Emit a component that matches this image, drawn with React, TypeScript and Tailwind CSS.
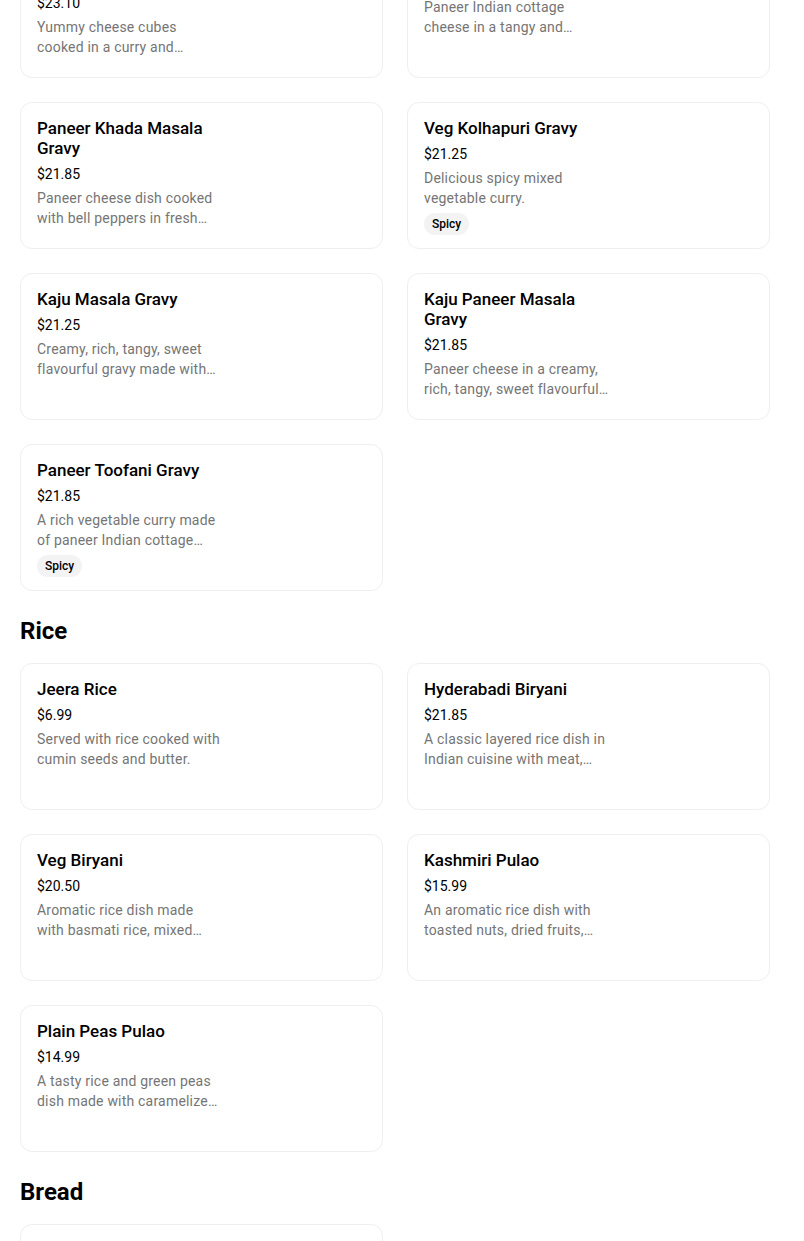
import React from 'react';

type Dish = {
  name: string;
  price: string;
  description: string;
  tags?: string[];
};

type Section = {
  title?: string;
  dishes: Dish[];
};

const sections: Section[] = [
  {
    dishes: [
      {
        name: 'Paneer Butter Masala Gravy',
        price: '$23.10',
        description: 'Yummy cheese cubes cooked in a curry and tomato-based gravy with cream.',
      },
      {
        name: 'Kadai Paneer Gravy',
        price: '$21.85',
        description: 'Paneer Indian cottage cheese in a tangy and flavourful kadai masala.',
      },
      {
        name: 'Paneer Khada Masala Gravy',
        price: '$21.85',
        description: 'Paneer cheese dish cooked with bell peppers in fresh ground spices.',
      },
      {
        name: 'Veg Kolhapuri Gravy',
        price: '$21.25',
        description: 'Delicious spicy mixed vegetable curry.',
        tags: ['Spicy'],
      },
      {
        name: 'Kaju Masala Gravy',
        price: '$21.25',
        description: 'Creamy, rich, tangy, sweet flavourful gravy made with cashew nuts.',
      },
      {
        name: 'Kaju Paneer Masala Gravy',
        price: '$21.85',
        description: 'Paneer cheese in a creamy, rich, tangy, sweet flavourful gravy with cashews.',
      },
      {
        name: 'Paneer Toofani Gravy',
        price: '$21.85',
        description: 'A rich vegetable curry made of paneer Indian cottage cheese and spices.',
        tags: ['Spicy'],
      },
    ],
  },
  {
    title: 'Rice',
    dishes: [
      {
        name: 'Jeera Rice',
        price: '$6.99',
        description: 'Served with rice cooked with cumin seeds and butter.',
      },
      {
        name: 'Hyderabadi Biryani',
        price: '$21.85',
        description: 'A classic layered rice dish in Indian cuisine with meat, spices and herbs.',
      },
      {
        name: 'Veg Biryani',
        price: '$20.50',
        description: 'Aromatic rice dish made with basmati rice, mixed vegetables and spices.',
      },
      {
        name: 'Kashmiri Pulao',
        price: '$15.99',
        description: 'An aromatic rice dish with toasted nuts, dried fruits, and saffron.',
      },
      {
        name: 'Plain Peas Pulao',
        price: '$14.99',
        description: 'A tasty rice and green peas dish made with caramelized onions.',
      },
    ],
  },
  {
    title: 'Bread',
    dishes: [
      {
        name: 'Butter Naan',
        price: '$3.99',
        description: 'Soft leavened flatbread brushed with butter.',
      },
    ],
  },
];

function DishCard({ dish }: { dish: Dish }) {
  return (
    <div className="h-[147px] rounded-xl border border-[#efefef] bg-white px-4 pt-[15px]">
      <div className="flex w-[186px] flex-col">
        <h3 className="text-[17px] font-medium leading-5 text-black">{dish.name}</h3>
        <p className="mt-[6px] text-sm leading-5 text-black">{dish.price}</p>
        <p className="mt-1 line-clamp-2 text-sm leading-5 tracking-[0.2px] text-[#757575]">{dish.description}</p>
        {dish.tags && (
          <div className="mt-[5px] flex gap-1">
            {dish.tags.map((tag) => (
              <span
                key={tag}
                className="flex h-[22px] items-center rounded-full bg-[#f3f3f3] px-2 text-xs font-medium text-black"
              >
                {tag}
              </span>
            ))}
          </div>
        )}
      </div>
    </div>
  );
}

export default function App() {
  return (
    <div className="min-h-screen overflow-hidden bg-white" style={{ fontFamily: 'Roboto, "Noto Sans", sans-serif' }}>
      <div className="-mt-[69px] pl-5 pr-[34px] pb-10">
        {sections.map((section, i) => (
          <section key={i}>
            {section.title && (
              <h2 className="mt-6 mb-4 text-2xl font-bold leading-8 text-black">{section.title}</h2>
            )}
            <div className="grid grid-cols-2 gap-6">
              {section.dishes.map((dish) => (
                <DishCard key={dish.name} dish={dish} />
              ))}
            </div>
          </section>
        ))}
      </div>
    </div>
  );
}
